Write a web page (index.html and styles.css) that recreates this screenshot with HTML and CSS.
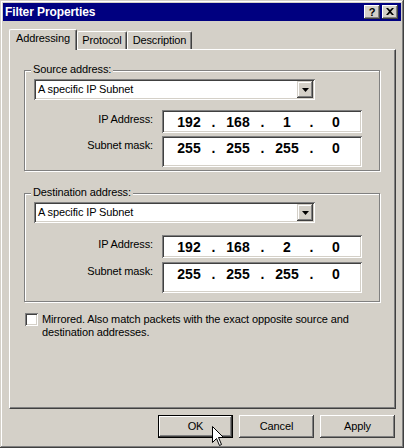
FILE: index.html
```html
<!DOCTYPE html>
<html>
<head>
<meta charset="utf-8">
<title>Filter Properties</title>
<link rel="stylesheet" href="styles.css">
</head>
<body>
<div class="window">
  <div class="titlebar">
    <span class="title">Filter Properties</span>
    <div class="tbtns">
      <span class="tbtn help">?</span>
      <span class="tbtn close"><svg width="8" height="7" viewBox="0 0 8 7"><path d="M0 0h2l2 2 2-2h2L5 3.5 8 7H6L4 5 2 7H0l3-3.5z" fill="#000"/></svg></span>
    </div>
  </div>

  <div class="tabs">
    <div class="tab sel t1">Addressing</div>
    <div class="tab t2">Protocol</div>
    <div class="tab t3">Description</div>
  </div>

  <div class="panel">
    <div class="group src">
      <div class="legend">Source address:</div>
      <div class="combo">
        <span class="combo-text">A specific IP Subnet</span>
        <span class="combo-btn"><svg width="7" height="4" viewBox="0 0 7 4"><path d="M0 0h7L3.5 4z" fill="#000"/></svg></span>
      </div>
      <div class="row r-ip">
        <span class="lbl">IP Address:</span>
        <div class="ipbox">
          <span class="oct">192</span><span class="dot">.</span><span class="oct">168</span><span class="dot">.</span><span class="oct">1</span><span class="dot">.</span><span class="oct">0</span>
        </div>
      </div>
      <div class="row r-mask">
        <span class="lbl">Subnet mask:</span>
        <div class="ipbox tall">
          <span class="oct">255</span><span class="dot">.</span><span class="oct">255</span><span class="dot">.</span><span class="oct">255</span><span class="dot">.</span><span class="oct">0</span>
        </div>
      </div>
    </div>

    <div class="group dst">
      <div class="legend">Destination address:</div>
      <div class="combo">
        <span class="combo-text">A specific IP Subnet</span>
        <span class="combo-btn"><svg width="7" height="4" viewBox="0 0 7 4"><path d="M0 0h7L3.5 4z" fill="#000"/></svg></span>
      </div>
      <div class="row r-ip">
        <span class="lbl">IP Address:</span>
        <div class="ipbox">
          <span class="oct">192</span><span class="dot">.</span><span class="oct">168</span><span class="dot">.</span><span class="oct">2</span><span class="dot">.</span><span class="oct">0</span>
        </div>
      </div>
      <div class="row r-mask">
        <span class="lbl">Subnet mask:</span>
        <div class="ipbox tall">
          <span class="oct">255</span><span class="dot">.</span><span class="oct">255</span><span class="dot">.</span><span class="oct">255</span><span class="dot">.</span><span class="oct">0</span>
        </div>
      </div>
    </div>

    <div class="check">
      <span class="box"></span>
      <span class="check-text">Mirrored. Also match packets with the exact opposite source and destination addresses.</span>
    </div>
  </div>

  <div class="buttons">
    <div class="btn default">OK</div>
    <div class="btn">Cancel</div>
    <div class="btn">Apply</div>
  </div>

  <svg class="cursor" width="13" height="21" viewBox="0 0 13 21"><path d="M0.5 0.5V16.5L4.5 12.5L7.5 19.5L9.5 18.5L6.5 11.5H11.5Z" fill="#fff" stroke="#000" stroke-width="1"/></svg>
</div>
</body>
</html>
```

FILE: styles.css
```css
* { box-sizing: border-box; }

html, body {
  margin: 0;
  padding: 0;
}

body {
  font-family: "Liberation Sans", Arial, sans-serif;
  font-size: 11px;
  line-height: 13px;
  letter-spacing: -0.12px;
  color: #000;
  background: #d4d0c8;
}

.window {
  position: relative;
  width: 404px;
  height: 448px;
  padding: 3px;
  background: #d4d0c8;
  box-shadow: inset -1px -1px #404040, inset 1px 1px #d4d0c8,
              inset -2px -2px #808080, inset 2px 2px #fff;
  overflow: hidden;
}

/* title bar */
.titlebar {
  height: 18px;
  background: #000080;
  display: flex;
  align-items: center;
  justify-content: space-between;
  padding: 0 3px 0 2px;
}

.title {
  color: #fff;
  font-weight: bold;
  font-size: 12px;
  letter-spacing: -0.1px;
}

.tbtns {
  display: flex;
  gap: 2px;
}

.tbtn {
  width: 16px;
  height: 14px;
  background: #d4d0c8;
  box-shadow: inset -1px -1px #404040, inset 1px 1px #fff,
              inset -2px -2px #808080, inset 2px 2px #d4d0c8;
  display: flex;
  align-items: center;
  justify-content: center;
}

.tbtn.help {
  font-weight: bold;
  font-size: 11px;
  line-height: 12px;
  padding-bottom: 1px;
}

.tbtn.close svg { display: block; margin-bottom: 1px; }

/* tabs */
.tabs {
  position: relative;
  z-index: 1;
  display: flex;
  align-items: flex-end;
  height: 20px;
  margin: 8px 0 0 6px;
}

.tab {
  height: 18px;
  padding-top: 2px;
  text-align: center;
  background: #d4d0c8;
  border-top: 1px solid #fff;
  border-left: 1px solid #fff;
  border-right: 1px solid #404040;
  box-shadow: inset -1px 0 #808080;
  border-radius: 2px 2px 0 0;
}

.tab.sel {
  height: 21px;
  margin-bottom: -1px;
}

.t1 { width: 68px; }
.t2 { width: 50px; }
.t3 { width: 65px; }

/* panel */
.panel {
  margin-left: 6px;
  width: 387px;
  height: 360px;
  padding-top: 20px;
  border-top: 1px solid #fff;
  border-left: 1px solid #fff;
  border-right: 1px solid #404040;
  border-bottom: 1px solid #404040;
  box-shadow: inset -1px -1px #808080;
}

/* group boxes */
.group {
  margin-left: 14px;
  width: 356px;
  border: 1px solid #808080;
  box-shadow: inset 1px 1px #fff, 1px 1px #fff;
}

.group.src { padding-bottom: 3px; }
.group.dst { margin-top: 22px; padding-bottom: 8px; }

.legend {
  width: fit-content;
  height: 13px;
  margin: -8px 0 0 6px;
  padding: 0 2px;
  background: #d4d0c8;
}

.combo {
  margin: 3px 0 0 9px;
  width: 281px;
  height: 21px;
  padding: 2px;
  background: #fff;
  display: flex;
  align-items: center;
  justify-content: space-between;
  box-shadow: inset 1px 1px #808080, inset -1px -1px #fff,
              inset 2px 2px #404040, inset -2px -2px #d4d0c8;
}

.combo-text { padding-left: 2px; }

.combo-btn {
  width: 16px;
  height: 17px;
  background: #d4d0c8;
  display: flex;
  align-items: center;
  justify-content: center;
  box-shadow: inset -1px -1px #404040, inset 1px 1px #d4d0c8,
              inset -2px -2px #808080, inset 2px 2px #fff;
}

.combo-btn svg { display: block; }

.row {
  display: flex;
  align-items: flex-start;
}

.src .r-ip { margin-top: 10px; }
.src .r-mask { margin-top: 3px; }
.dst .r-ip { margin-top: 12px; }
.dst .r-mask { margin-top: 4px; }

.lbl {
  width: 128px;
  margin-top: 3px;
  margin-right: 9px;
  text-align: right;
}

.ipbox {
  width: 200px;
  height: 23px;
  padding: 3px 0 0 7px;
  background: #fff;
  display: flex;
  font-weight: bold;
  font-size: 14px;
  line-height: 18px;
  letter-spacing: 0;
  box-shadow: inset 1px 1px #808080, inset -1px -1px #fff,
              inset 2px 2px #404040, inset -2px -2px #d4d0c8;
}

.ipbox.tall { height: 31px; }

.oct { width: 40px; text-align: center; }
.dot { width: 9px; text-align: center; }

/* checkbox */
.check {
  display: flex;
  align-items: flex-start;
  margin: 11px 0 0 15px;
}

.box {
  flex: none;
  width: 13px;
  height: 13px;
  background: #fff;
  box-shadow: inset 1px 1px #808080, inset -1px -1px #fff,
              inset 2px 2px #404040, inset -2px -2px #d4d0c8;
}

.check-text {
  width: 330px;
  margin-left: 4px;
}

/* buttons */
.buttons {
  display: flex;
  gap: 6px;
  margin: 6px 0 0 155px;
}

.btn {
  width: 75px;
  height: 23px;
  display: flex;
  align-items: center;
  justify-content: center;
  background: #d4d0c8;
  box-shadow: inset -1px -1px #404040, inset 1px 1px #fff,
              inset -2px -2px #808080, inset 2px 2px #d4d0c8;
}

.btn.default {
  border: 1px solid #000;
  box-shadow: inset -1px -1px #404040, inset 1px 1px #fff,
              inset -2px -2px #808080;
}

.cursor {
  position: absolute;
  left: 212px;
  top: 426px;
}
```
